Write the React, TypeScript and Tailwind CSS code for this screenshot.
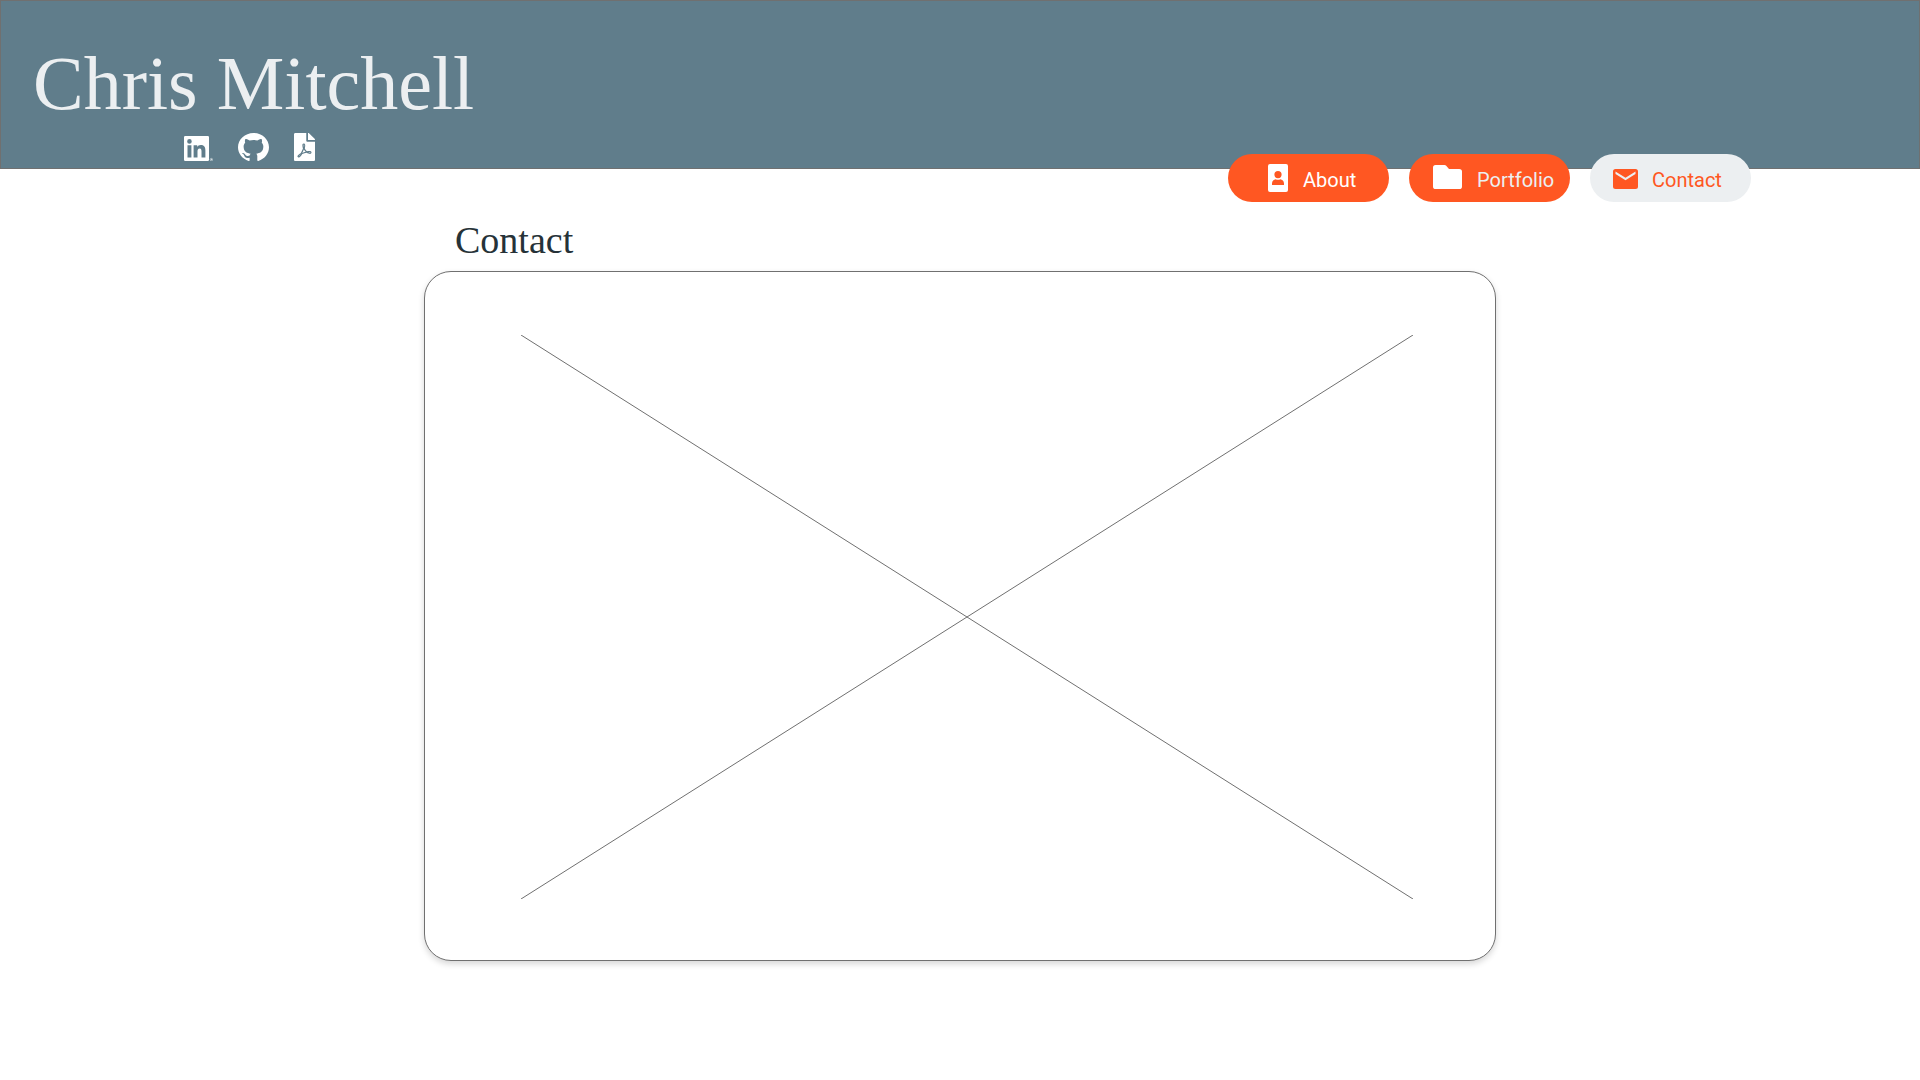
import React from "react";
import { FaFilePdf } from "react-icons/fa";

function LinkedInIcon() {
  return (
    <svg viewBox="0 0 29 25" className="h-[25px] w-[29px]" fill="currentColor" aria-hidden="true">
      <path
        fillRule="evenodd"
        d="M1.2 0H23.8Q25 0 25 1.2V23.8Q25 25 23.8 25H1.2Q0 25 0 23.8V1.2Q0 0 1.2 0ZM3.5 9.2V21.5H7.4V9.2ZM5.45 3.1A2.3 2.3 0 1 0 5.45 7.7A2.3 2.3 0 1 0 5.45 3.1ZM9.6 9.2V21.5H13.5V15.4C13.5 13.8 13.9 12.4 15.7 12.4C17.4 12.4 17.5 14 17.5 15.5V21.5H21.4V14.8C21.4 11.4 20.6 8.9 16.8 8.9C15 8.9 13.8 9.9 13.3 10.8H13.2V9.2Z"
      />
      <circle cx="27.4" cy="23.6" r="1.2" fill="none" stroke="currentColor" strokeWidth="0.5" />
      <circle cx="27.4" cy="23.6" r="0.5" />
    </svg>
  );
}

function GitHubIcon() {
  return (
    <svg viewBox="0 0.297 24 23.4" preserveAspectRatio="none" className="h-7 w-[31px]" fill="currentColor" aria-hidden="true">
      <path
        fillRule="evenodd"
        d="M12 .297c-6.63 0-12 5.373-12 12 0 5.303 3.438 9.8 8.205 11.385.6.113.82-.258.82-.577 0-.285-.01-1.04-.015-2.04-3.338.724-4.042-1.61-4.042-1.61C4.422 18.07 3.633 17.7 3.633 17.7c-1.087-.744.084-.729.084-.729 1.205.084 1.838 1.236 1.838 1.236 1.07 1.835 2.809 1.305 3.495.998.108-.776.417-1.305.76-1.605-2.665-.3-5.466-1.332-5.466-5.93 0-1.31.465-2.38 1.235-3.22-.135-.303-.54-1.523.105-3.176 0 0 1.005-.322 3.3 1.23.96-.267 1.98-.399 3-.405 1.02.006 2.04.138 3 .405 2.28-1.552 3.285-1.23 3.285-1.23.645 1.653.24 2.873.12 3.176.765.84 1.23 1.91 1.23 3.22 0 4.61-2.805 5.625-5.475 5.92.42.36.81 1.096.81 2.22 0 1.606-.015 2.896-.015 3.286 0 .315.21.69.825.57C20.565 22.092 24 17.592 24 12.297c0-6.627-5.373-12-12-12"
      />
    </svg>
  );
}

function AboutIcon() {
  return (
    <svg viewBox="0 0 20 28" className="h-7 w-5" fill="currentColor" aria-hidden="true">
      <path
        fillRule="evenodd"
        d="M2 0H18Q20 0 20 2V26Q20 28 18 28H2Q0 28 0 26V2Q0 0 2 0ZM10 7A3.6 3.6 0 1 0 10 14.2A3.6 3.6 0 1 0 10 7ZM4 21H16V19.5C16 17 14.2 15.5 12.3 15.2Q10 16.4 7.7 15.2C5.8 15.5 4 17 4 19.5Z"
      />
    </svg>
  );
}

function FolderIcon() {
  return (
    <svg viewBox="0 0 29 24" className="h-6 w-[29px]" fill="currentColor" aria-hidden="true">
      <path d="M2.5 0H11.5Q12.5 0 13.2 .8L16 4H26.2Q29 4 29 6.6V21.4Q29 24 26.2 24H2.8Q0 24 0 21.4V2.5Q0 0 2.5 0Z" />
    </svg>
  );
}

function MailIcon() {
  return (
    <svg viewBox="0 0 25 20" className="h-5 w-[25px]" fill="currentColor" aria-hidden="true">
      <path
        fillRule="evenodd"
        d="M2.5 0H22.5Q25 0 25 2.5V17.5Q25 20 22.5 20H2.5Q0 20 0 17.5V2.5Q0 0 2.5 0ZM2.5 2.5V5L12.5 11.3L22.5 5V2.5L12.5 8.8Z"
      />
    </svg>
  );
}

const pill = "flex h-12 w-[161px] items-center rounded-full text-xl";

export default function App() {
  return (
    <div className="min-h-screen bg-white font-['Roboto',sans-serif]">
      <header className="h-[169px] border border-[#707070] bg-[#607d8b] pt-[38px]">
        <h1 className="pl-8 font-['Liberation_Serif',serif] text-[76px] leading-[88px] text-[#eceff1]">
          Chris Mitchell
        </h1>
        <div className="mt-[6px] flex items-end pl-[183px] text-white">
          <a href="#linkedin" aria-label="LinkedIn">
            <LinkedInIcon />
          </a>
          <a href="#github" aria-label="GitHub" className="ml-[25px]">
            <GitHubIcon />
          </a>
          <a href="#resume" aria-label="Resume PDF" className="ml-[25px]">
            <FaFilePdf className="h-7 w-[21px]" />
          </a>
        </div>
      </header>

      <nav className="relative -mt-[15px] flex justify-end gap-5 pr-[169px]">
        <a href="#about" className={`${pill} gap-[15px] bg-[#ff5722] pl-10 text-white`}>
          <AboutIcon />
          <span className="pt-1">About</span>
        </a>
        <a href="#portfolio" className={`${pill} gap-[15px] bg-[#ff5722] pl-6 text-[#eceff1]`}>
          <span className="pb-[2px] text-white">
            <FolderIcon />
          </span>
          <span className="pt-1">Portfolio</span>
        </a>
        <a href="#contact" aria-current="page" className={`${pill} gap-[14px] bg-[#eceff1] pl-[23px] text-[#ff5722]`}>
          <span className="pt-[2px]">
            <MailIcon />
          </span>
          <span className="pt-1">Contact</span>
        </a>
      </nav>

      <main className="mx-auto w-full max-w-[1072px]">
        <h2 className="pt-4 pl-[31px] font-['Liberation_Serif',serif] text-[38px] leading-[44px] text-[#263238]">
          Contact
        </h2>
        <section
          aria-label="Contact form"
          className="mt-[9px] rounded-[27px] border border-[#707070] bg-white pt-[63px] pr-[82px] pb-[61px] pl-[96px] shadow-[0_3px_6px_rgba(0,0,0,0.16)]"
        >
          <svg viewBox="0 0 892 564" className="block w-full" fill="none" stroke="#707070" aria-hidden="true">
            <path d="M0 0L892 564M892 0L0 564" />
          </svg>
        </section>
      </main>
    </div>
  );
}
